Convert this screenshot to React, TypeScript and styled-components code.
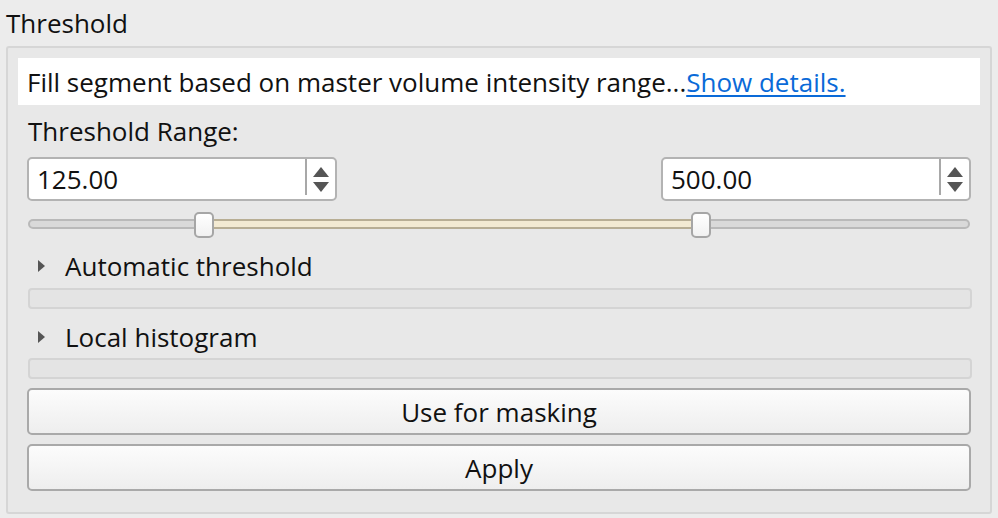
import React from 'react';
import styled, { createGlobalStyle } from 'styled-components';

const GlobalStyle = createGlobalStyle`
  html, body {
    margin: 0;
    padding: 0;
    background: #ececec;
    font-family: "Open Sans", "Liberation Sans", Arial, sans-serif;
    font-size: 26px;
    color: #111;
  }
`;

const Page = styled.div`
  width: 998px;
  height: 518px;
  display: flex;
  flex-direction: column;
  box-sizing: border-box;
  padding: 0 6px;
`;

const Title = styled.div`
  height: 46px;
  display: flex;
  align-items: center;
  padding-bottom: 1px;
  box-sizing: border-box;
`;

const Group = styled.div`
  height: 468px;
  box-sizing: border-box;
  border: 2px solid #d6d6d6;
  border-radius: 3px;
  background: #e8e8e8;
  padding: 10px 10px 0 10px;
  display: flex;
  flex-direction: column;
`;

const InfoBar = styled.div`
  height: 47px;
  background: #ffffff;
  display: flex;
  align-items: center;
  padding-left: 9px;
  white-space: nowrap;
`;

const Link = styled.a`
  color: #0a6ad8;
  text-decoration: underline;
  text-underline-offset: 3px;
  text-decoration-thickness: 1.5px;
  cursor: pointer;
`;

const Body = styled.div`
  display: flex;
  flex-direction: column;
  padding: 0 9px;
`;

const Label = styled.div`
  height: 52px;
  display: flex;
  align-items: center;
  padding-left: 1px;
`;

const SpinRow = styled.div`
  display: flex;
  justify-content: space-between;
  height: 44px;
`;

const SpinBox = styled.div`
  width: 310px;
  height: 44px;
  box-sizing: border-box;
  border: 2px solid #b3b3b3;
  border-radius: 5px;
  background: #fff;
  display: flex;
  overflow: hidden;
`;

const SpinValue = styled.div`
  flex: 1;
  display: flex;
  align-items: center;
  padding-left: 8px;
  border-right: 2px solid #a8a8a8;
  margin-bottom: 4px;
  padding-top: 4px;
`;

const SpinArrows = styled.div`
  width: 28px;
  display: flex;
  flex-direction: column;
  align-items: center;
  justify-content: center;
  gap: 5px;
`;

const SliderWrap = styled.div`
  position: relative;
  height: 26px;
  margin-top: 11px;
  margin-left: 1px;
  margin-right: 1px;
`;

const Track = styled.div`
  position: absolute;
  left: 0;
  right: 0;
  top: 7px;
  height: 10px;
  box-sizing: border-box;
  border: 2px solid #b9b9b9;
  border-radius: 5px;
  background: #d9d9d9;
`;

const Range = styled.div`
  position: absolute;
  top: 7px;
  height: 10px;
  box-sizing: border-box;
  border: 2px solid #b8ae94;
  border-left: none;
  border-right: none;
  background: #f3ead2;
`;

const Handle = styled.div`
  position: absolute;
  top: 0;
  width: 20px;
  height: 26px;
  margin-left: -10px;
  box-sizing: border-box;
  border: 2px solid #a6a6a6;
  border-radius: 5px;
  background: linear-gradient(#ffffff, #f1f1f1);
`;

const Section = styled.div<{ $h: number }>`
  height: ${(p) => p.$h}px;
  display: flex;
  align-items: center;
  padding-top: 6px;
  box-sizing: border-box;
`;

const Caret = styled.span`
  display: inline-block;
  width: 0;
  height: 0;
  border-top: 6px solid transparent;
  border-bottom: 6px solid transparent;
  border-left: 7px solid #555;
  margin-left: 11px;
  margin-right: 20px;
`;

const Divider = styled.div`
  height: 21px;
  box-sizing: border-box;
  border: 2px solid #d4d4d4;
  border-radius: 4px;
  background: #e4e4e4;
  margin-left: 1px;
  margin-right: -1px;
`;

const Button = styled.button`
  height: 47px;
  box-sizing: border-box;
  border: 2px solid #a9a9a9;
  border-radius: 5px;
  background: linear-gradient(#fcfcfc, #eeeeee);
  font-family: inherit;
  font-size: 26px;
  color: #111;
  margin-top: 9px;
  padding: 0;
  cursor: pointer;
`;

const Arrow = ({ up }: { up?: boolean }) => (
  <svg width="16" height="10" viewBox="0 0 16 10">
    <path d={up ? 'M8 0 L16 10 L0 10 Z' : 'M0 0 L16 0 L8 10 Z'} fill="#555" />
  </svg>
);

const Spin = ({ value }: { value: string }) => (
  <SpinBox>
    <SpinValue>{value}</SpinValue>
    <SpinArrows>
      <Arrow up />
      <Arrow />
    </SpinArrows>
  </SpinBox>
);

const lo = 0.187;
const hi = 0.714;

export default function App() {
  return (
    <>
      <GlobalStyle />
      <Page>
        <Title>Threshold</Title>
        <Group>
          <InfoBar>
            Fill segment based on master volume intensity range...<Link>Show details.</Link>
          </InfoBar>
          <Body>
            <Label>Threshold Range:</Label>
            <SpinRow>
              <Spin value="125.00" />
              <Spin value="500.00" />
            </SpinRow>
            <SliderWrap>
              <Track />
              <Range style={{ left: `${lo * 100}%`, width: `${(hi - lo) * 100}%` }} />
              <Handle style={{ left: `${lo * 100}%` }} />
              <Handle style={{ left: `${hi * 100}%` }} />
            </SliderWrap>
            <Section $h={50}>
              <Caret />
              Automatic threshold
            </Section>
            <Divider />
            <Section $h={49}>
              <Caret />
              Local histogram
            </Section>
            <Divider />
            <Button>Use for masking</Button>
            <Button>Apply</Button>
          </Body>
        </Group>
      </Page>
    </>
  );
}
